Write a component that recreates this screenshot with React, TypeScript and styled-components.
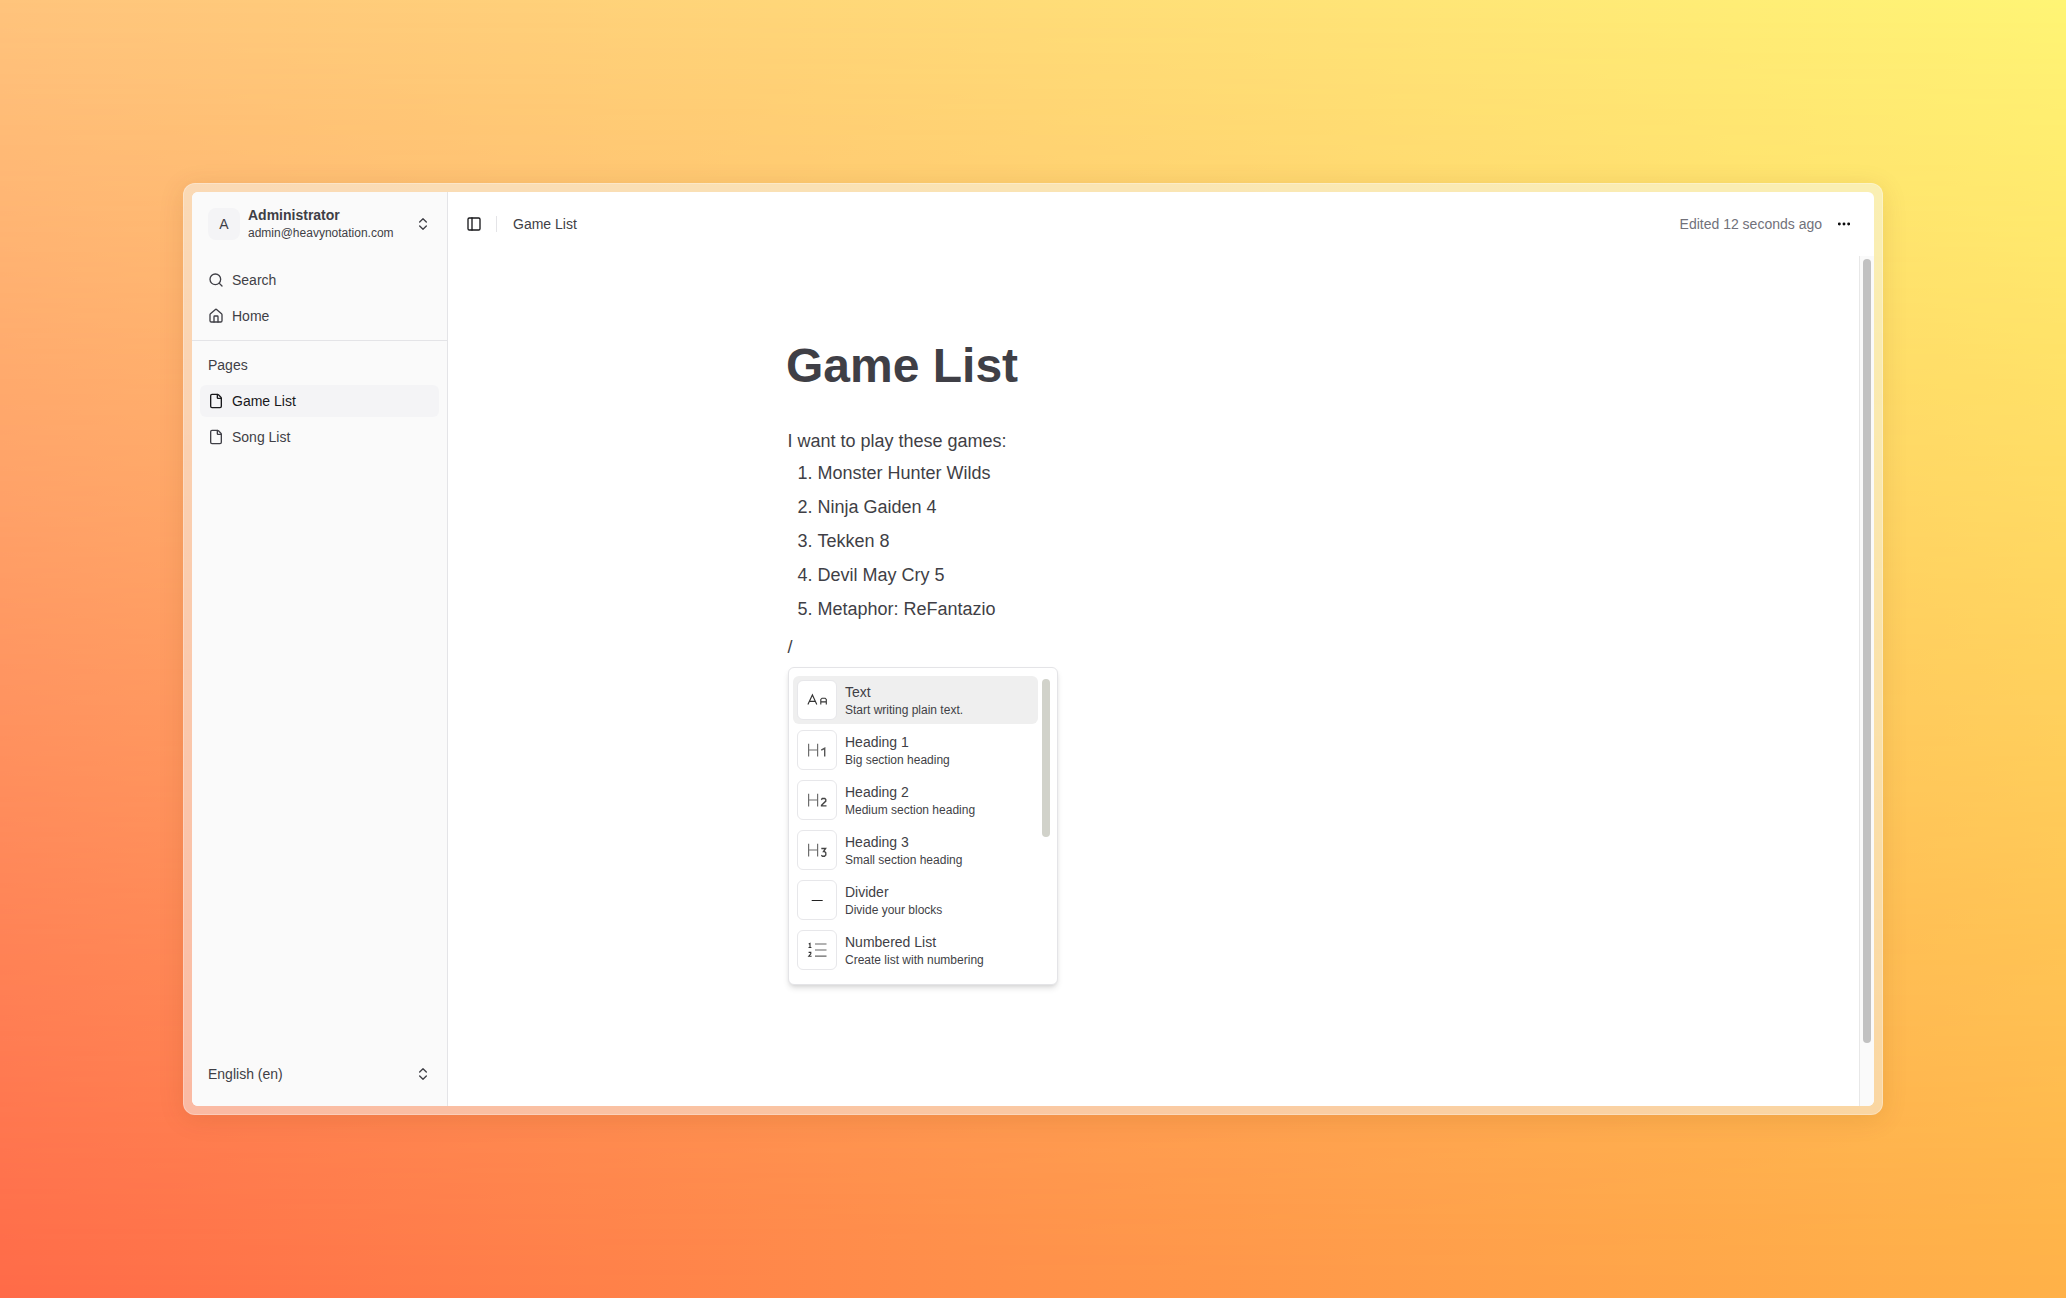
import React from "react";
import styled, { createGlobalStyle } from "styled-components";
import { ChevronsUpDown, Ellipsis, File, House, PanelLeft, Search } from "lucide-react";

const GlobalStyle = createGlobalStyle`
  * { box-sizing: border-box; }
  body {
    margin: 0;
    font-family: "Liberation Sans", Arial, sans-serif;
    color: #3f3f46;
    overflow: hidden;
  }
`;

const Backdrop = styled.main`
  position: relative;
  isolation: isolate;
  width: 100vw;
  height: 100vh;
  display: grid;
  place-items: center;
  background: linear-gradient(to right, #ffc47c, #ffdc78 50%, #fff575);
  &::before {
    content: "";
    position: absolute;
    inset: 0;
    z-index: -1;
    background: linear-gradient(to right, #ff6a48, #ff8f49 50%, #ffb148);
    mask-image: linear-gradient(to bottom, transparent, #000);
  }
`;

const Frame = styled.div`
  width: 1700px;
  height: 932px;
  padding: 8px;
  border: 1px solid rgba(255, 255, 255, 0.25);
  border-radius: 12px;
  background: rgba(245, 248, 250, 0.49);
  box-shadow: 0 4px 26px rgba(110, 60, 0, 0.12);
`;

const Window = styled.div`
  height: 100%;
  display: grid;
  grid-template-columns: 256px 1fr;
  border-radius: 6px;
  overflow: hidden;
  background: #fff;
`;

const Sidebar = styled.aside`
  display: flex;
  flex-direction: column;
  background: #fafafa;
  border-right: 1px solid #e4e4e7;
`;

const Account = styled.div`
  display: flex;
  align-items: center;
  gap: 8px;
  height: 64px;
  padding: 0 16px;
`;

const Avatar = styled.div`
  display: grid;
  place-items: center;
  width: 32px;
  height: 32px;
  border-radius: 8px;
  background: #f4f4f6;
  font-size: 14px;
`;

const AccountText = styled.div`
  flex: 1;
  display: flex;
  flex-direction: column;
`;

const AccountName = styled.span`
  font-size: 14px;
  line-height: 17px;
  padding-bottom: 1px;
  font-weight: 700;
`;

const AccountMail = styled.span`
  font-size: 12px;
  line-height: 16px;
`;

const NavGroup = styled.nav`
  display: flex;
  flex-direction: column;
  gap: 4px;
  padding: 8px;
`;

const NavItem = styled.a<{ $active?: boolean }>`
  display: flex;
  align-items: center;
  gap: 8px;
  height: 32px;
  padding: 0 8px;
  border-radius: 6px;
  font-size: 14px;
  color: ${(p) => (p.$active ? "#18181b" : "#3f3f46")};
  background: ${(p) => (p.$active ? "#f4f4f6" : "transparent")};
`;

const Rule = styled.hr`
  width: 100%;
  height: 1px;
  margin: 0;
  border: 0;
  background: #e4e4e7;
`;

const GroupLabel = styled.div`
  display: flex;
  align-items: center;
  height: 32px;
  padding: 0 8px;
  font-size: 14px;
`;

const Language = styled.div`
  display: flex;
  align-items: center;
  justify-content: space-between;
  height: 48px;
  margin-top: auto;
  margin-bottom: 8px;
  padding: 0 16px;
  font-size: 14px;
`;

const Content = styled.section`
  display: grid;
  grid-template-rows: 64px 1fr;
  min-height: 0;
`;

const TopBar = styled.header`
  display: flex;
  align-items: center;
  padding: 0 22px 0 18px;
  font-size: 14px;
`;

const Separator = styled.span`
  width: 1px;
  height: 16px;
  margin: 0 16px 0 14px;
  background: #e4e4e7;
`;

const Edited = styled.span`
  margin-left: auto;
  margin-right: 14px;
  color: #71717a;
`;

const Scroller = styled.div`
  display: grid;
  grid-template-columns: 1fr 15px;
  min-height: 0;
`;

const Track = styled.div`
  padding: 3px 3px 0 3px;
  border-left: 1px solid #e8e8e8;
  background: #fafafa;
`;

const Thumb = styled.div`
  width: 8px;
  height: 784px;
  border-radius: 4px;
  background: #c1c1c1;
`;

const Article = styled.article`
  padding: 82px 0 0 340px;
`;

const Title = styled.h1`
  margin: 0 0 33px -2px;
  font-size: 48px;
  line-height: 56px;
  font-weight: 700;
`;

const Paragraph = styled.p`
  margin: 0 0 0 -0.5px;
  font-size: 18px;
  line-height: 28px;
`;

const NumberList = styled.ol`
  margin: 1px 0 7px;
  padding: 0;
  list-style: none;
`;

const NumberItem = styled.li`
  display: flex;
  gap: 5px;
  padding-left: 9.5px;
  font-size: 18px;
  line-height: 34px;
`;

const Menu = styled.div`
  display: flex;
  justify-content: space-between;
  width: 270px;
  height: 318px;
  margin-top: 6px;
  padding: 8px 7px 8px 4px;
  border: 1px solid #e4e4e7;
  border-radius: 6px;
  background: #fff;
  box-shadow: 0 4px 6px -1px rgba(0, 0, 0, 0.13), 0 2px 4px -2px rgba(0, 0, 0, 0.1);
`;

const MenuItems = styled.div`
  display: flex;
  flex-direction: column;
  gap: 2px;
  width: 245px;
`;

const MenuItem = styled.div<{ $active?: boolean }>`
  display: flex;
  align-items: center;
  gap: 8px;
  height: 48px;
  padding: 0 4px;
  border-radius: 6px;
  background: ${(p) => (p.$active ? "#efefef" : "transparent")};
`;

const IconTile = styled.div`
  display: grid;
  place-items: center;
  width: 40px;
  height: 40px;
  border: 1px solid #e7e7ea;
  border-radius: 6px;
  background: #fff;
`;

const ItemName = styled.div`
  font-size: 14px;
  line-height: 19px;
`;

const ItemHint = styled.div`
  font-size: 12px;
  line-height: 16px;
`;

const MenuThumb = styled.div`
  width: 8px;
  height: 158px;
  margin-top: 3px;
  border-radius: 4px;
  background: #d1d2ca;
`;

type GlyphName = "text" | "h1" | "h2" | "h3" | "divider" | "numbered";

const H_STEMS = "M1.6 3.7v12.8M10.6 3.7v12.8M1.6 10h9";

const GLYPHS: Record<GlyphName, React.ReactNode> = {
  text: (
    <g stroke="#333" strokeWidth="1.1">
      <path d="M.9 14.5 5.4 4.9l4.4 9.6M2.5 11.4h5.7" />
      <path d="M13.8 14.6V9.4l1.3-1.2h3l1.2 1.2v5.2M13.8 11.9h5.5" />
    </g>
  ),
  h1: (
    <>
      <path d={H_STEMS} stroke="#6e6e6e" strokeWidth="1.2" />
      <path d="M14.2 10.2 17.7 8.3v8.2" stroke="#555" strokeWidth="1.4" />
    </>
  ),
  h2: (
    <>
      <path d={H_STEMS} stroke="#6e6e6e" strokeWidth="1.2" />
      <path d="M14.3 9.7l1-1.2h2.5l1 1.1v1.5l-4.3 4.2v.6h5" stroke="#444" strokeWidth="1.35" />
    </>
  ),
  h3: (
    <>
      <path d={H_STEMS} stroke="#6e6e6e" strokeWidth="1.2" />
      <path d="M14.3 8.5h4.3l-2.1 3h1l1.3 1.2v2.3l-1.3 1.2h-2l-1.2-1" stroke="#444" strokeWidth="1.35" />
    </>
  ),
  divider: <path d="M4.7 10.5h11" stroke="#222" strokeWidth="1" />,
  numbered: (
    <>
      <path d="M8 4h11.5M8 10h11.5M8 16.2h11.5" stroke="#666" strokeWidth="1.2" />
      <path d="M1.7 4 3 3.4v4.1M1.5 7.5h2.9M1.6 12.4h2.2v1.5l-2 2.3h2.8" stroke="#333" strokeWidth="1.1" />
    </>
  ),
};

const Glyph = ({ name }: { name: GlyphName }) => (
  <svg width="20" height="20" viewBox="0 0 20 20" fill="none">
    {GLYPHS[name]}
  </svg>
);

const games = ["Monster Hunter Wilds", "Ninja Gaiden 4", "Tekken 8", "Devil May Cry 5", "Metaphor: ReFantazio"];

const blocks: { glyph: GlyphName; name: string; hint: string }[] = [
  { glyph: "text", name: "Text", hint: "Start writing plain text." },
  { glyph: "h1", name: "Heading 1", hint: "Big section heading" },
  { glyph: "h2", name: "Heading 2", hint: "Medium section heading" },
  { glyph: "h3", name: "Heading 3", hint: "Small section heading" },
  { glyph: "divider", name: "Divider", hint: "Divide your blocks" },
  { glyph: "numbered", name: "Numbered List", hint: "Create list with numbering" },
];

export default function App() {
  return (
    <>
      <GlobalStyle />
      <Backdrop>
        <Frame>
          <Window>
            <Sidebar>
              <Account>
                <Avatar>A</Avatar>
                <AccountText>
                  <AccountName>Administrator</AccountName>
                  <AccountMail>admin@heavynotation.com</AccountMail>
                </AccountText>
                <ChevronsUpDown size={16} />
              </Account>
              <NavGroup>
                <NavItem><Search size={16} />Search</NavItem>
                <NavItem><House size={16} />Home</NavItem>
              </NavGroup>
              <Rule />
              <NavGroup>
                <GroupLabel>Pages</GroupLabel>
                <NavItem $active><File size={16} />Game List</NavItem>
                <NavItem><File size={16} />Song List</NavItem>
              </NavGroup>
              <Language>
                English (en)
                <ChevronsUpDown size={16} />
              </Language>
            </Sidebar>
            <Content>
              <TopBar>
                <PanelLeft size={16} color="#18181b" />
                <Separator />
                Game List
                <Edited>Edited 12 seconds ago</Edited>
                <Ellipsis size={16} strokeWidth={2.4} color="#09090b" />
              </TopBar>
              <Scroller>
                <Article>
                  <Title>Game List</Title>
                  <Paragraph>I want to play these games:</Paragraph>
                  <NumberList>
                    {games.map((game, i) => (
                      <NumberItem key={game}>
                        <span>{i + 1}.</span>
                        <span>{game}</span>
                      </NumberItem>
                    ))}
                  </NumberList>
                  <Paragraph>/</Paragraph>
                  <Menu>
                    <MenuItems>
                      {blocks.map((block, i) => (
                        <MenuItem key={block.name} $active={i === 0}>
                          <IconTile><Glyph name={block.glyph} /></IconTile>
                          <div>
                            <ItemName>{block.name}</ItemName>
                            <ItemHint>{block.hint}</ItemHint>
                          </div>
                        </MenuItem>
                      ))}
                    </MenuItems>
                    <MenuThumb />
                  </Menu>
                </Article>
                <Track><Thumb /></Track>
              </Scroller>
            </Content>
          </Window>
        </Frame>
      </Backdrop>
    </>
  );
}
